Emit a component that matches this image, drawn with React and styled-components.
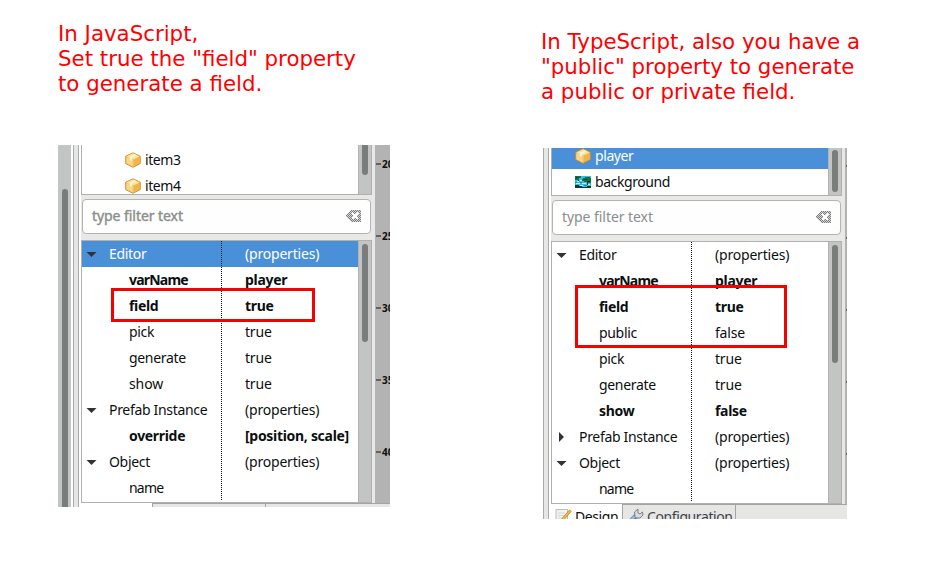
import React from "react";
import styled, { createGlobalStyle } from "styled-components";

const GlobalStyle = createGlobalStyle`
  * { box-sizing: border-box; }
  body {
    margin: 0;
    background: #fff;
    overflow: hidden;
  }
`;

const Page = styled.main`
  display: grid;
  grid-template-columns: 483px 1fr;
  width: 925px;
  height: 577px;
  overflow: hidden;
`;

const Column = styled.section`
  display: flex;
  flex-direction: column;
  align-items: flex-start;
  padding: ${(p) => p.$top}px 0 0 58px;
`;

const Caption = styled.h2`
  margin: 0;
  height: ${(p) => p.$height}px;
  font: 400 21.33px/25px "DejaVu Sans", sans-serif;
  letter-spacing: 0;
  color: #f00;
  white-space: pre;
`;

const Panel = styled.div`
  display: flex;
  flex: none;
  width: ${(p) => p.$width}px;
  height: ${(p) => p.$height}px;
  margin-left: ${(p) => p.$indent}px;
  overflow: hidden;
  background: #e8e8e7;
  color: #0c0f10;
  font: 14px/26px "Noto Sans", sans-serif;
`;

const Track = styled.div`
  flex: none;
  width: 13px;
  padding: ${(p) => p.$offset}px 0 0 ${(p) => (p.$edge ? 3 : 4)}px;
  background: #c3c5c4;
  border-left: ${(p) => (p.$edge ? 1 : 0)}px solid #b3b4b2;
`;

const Thumb = styled.div`
  width: 6px;
  height: ${(p) => p.$height}px;
  background: #797d7c;
  border-radius: ${(p) => (p.$cutTop ? "0 0 3px 3px" : "3px")};
`;

const Gap = styled.div`
  flex: none;
  width: 2px;
  background: #fff;
`;

const Sash = styled.div`
  flex: none;
  width: 6px;
  background: #e6e6e5;
  border: solid #a9abaa;
  border-width: 0 1px;
`;

const Views = styled.div`
  display: flex;
  flex-direction: column;
  flex: none;
  width: 291px;
`;

const Tree = styled.div`
  display: flex;
  flex: none;
  height: ${(p) => p.$height}px;
  border: solid #b0b1ae;
  border-width: 0 1px 1px;
  background: #fff;
`;

const TreeList = styled.ul`
  flex: 1;
  display: flex;
  flex-direction: column;
  justify-content: flex-end;
  margin: 0 0 ${(p) => p.$shift}px;
  padding: 0;
  list-style: none;
  overflow: hidden;
`;

const TreeItem = styled.li`
  display: flex;
  flex: none;
  align-items: center;
  gap: 4px;
  height: 26px;
  padding-left: ${(p) => p.$indent}px;
  background: ${(p) => (p.$selected ? "#4a90d9" : "transparent")};
  color: ${(p) => (p.$selected ? "#fff" : "inherit")};
  letter-spacing: -0.42px;
`;

const Filter = styled.div`
  display: flex;
  flex: none;
  align-items: center;
  justify-content: space-between;
  height: 35px;
  margin: 4px 1px 6px;
  padding: 0 9px 1px;
  border: 1px solid #b3b4b0;
  border-radius: 4px;
  background: #fefefe;
  color: #8b8e8b;
  letter-spacing: -0.06px;
  -webkit-text-stroke: ${(p) => (p.$heavy ? 0.4 : 0)}px #8b8e8b;
`;

const Properties = styled.div`
  position: relative;
  display: flex;
  flex: none;
  height: 263px;
  border: 1px solid #b0b1ae;
  background: #fff;
`;

const Rows = styled.div`
  flex: 1;
`;

const Row = styled.div`
  display: grid;
  grid-template-columns: 139px 1fr;
  height: 26px;
  background: ${(p) => (p.$selected ? "#4a90d9" : "transparent")};
  color: ${(p) => (p.$selected ? "#fff" : "inherit")};
  font-weight: ${(p) => (p.$bold ? 700 : 400)};
`;

const Name = styled.div`
  display: flex;
  align-items: center;
  padding-left: ${(p) => (p.$group ? 3 : 47)}px;
  gap: 11px;
  white-space: nowrap;
  letter-spacing: ${(p) => p.$tracking}px;
`;

const Value = styled.div`
  height: 26px;
  padding-left: 24px;
  white-space: nowrap;
  letter-spacing: ${(p) => (p.$bold ? -0.3 : -0.2)}px;
  background: repeating-linear-gradient(#111 0 1px, transparent 1px 2px) 0 0 / 1px 100% no-repeat;
`;

const Highlight = styled.div`
  position: absolute;
  left: ${(p) => p.$left}px;
  top: ${(p) => p.$top}px;
  width: ${(p) => p.$width}px;
  height: ${(p) => p.$height}px;
  border: 3px solid #f60000;
`;

const Tabs = styled.div`
  display: flex;
  flex: none;
  width: 316px;
  height: 26px;
  margin-left: -2px;
`;

const Tab = styled.div`
  display: flex;
  flex: none;
  gap: 3px;
  width: ${(p) => p.$width}px;
  padding-left: ${(p) => (p.$active ? 6 : 4)}px;
  border: solid #a3a5a2;
  border-width: ${(p) => (p.$active ? "0" : "1px 0 0 1px")};
  background: ${(p) => (p.$active ? "#fff" : "#e6e6e5")};
  color: ${(p) => (p.$active ? "#0c0f10" : "#3d4345")};
  line-height: ${(p) => (p.$active ? 25 : 24)}px;
  letter-spacing: -0.4px;
  white-space: nowrap;
`;

const TabIcon = styled.svg`
  flex: none;
  margin-top: ${(p) => p.$top}px;
`;

const Ruler = styled.div`
  flex: none;
  width: 20px;
  height: ${(p) => p.$height}px;
  margin-left: 3px;
  overflow: hidden;
  background: #b3b3b3;
`;

const MarkList = styled.div`
  margin-top: ${(p) => p.$shift}px;
`;

const Mark = styled.div`
  display: flex;
  align-items: center;
  height: 72px;
  padding-left: 1px;
  font: 700 10px/12px "Noto Sans", sans-serif;

  &::before {
    content: "";
    flex: none;
    width: 5px;
    height: 2px;
    margin-right: 1px;
    background: #626262;
  }
`;

const Edge = styled.div`
  flex: none;
  width: 2px;
  background: #fff;
`;

const BoxIcon = () => (
  <svg width="16" height="16" viewBox="0 0 16 16">
    <path d="M8 .8 15.300 4.200v7.400L8 15.300.700 11.600V4.200z" fill="#efb947" stroke="#c98b32" strokeWidth=".9" strokeLinejoin="round" />
    <path d="M8 1.300 14.600 4.400 8 7.700 1.400 4.400z" fill="#fde39a" />
    <path d="M1.400 5 7.700 8v6.500l-6.300-3.200z" fill="#fbd68a" />
    <path d="m8.300 8 6.300-3v6.300l-6.300 3.200z" fill="#edb54c" />
    <path d="m9.500 2.200 2.300 1.100-5 2.600v2.800l-2-1V4.800z" fill="#fff6d8" />
    <path d="M8 7.800v6.500" stroke="#f9dc98" strokeWidth=".6" />
  </svg>
);

const PictureIcon = () => (
  <svg width="16" height="12" viewBox="0 0 16 12" shapeRendering="crispEdges">
    <path fill="#31bdf0" d="M0 0h16v12H0z" />
    <path fill="#11733b" d="M0 0h6v2H4v2H0zM8 2h2V1h5v1h1v5h-3V6H9V5H7V3h1z" />
    <path fill="#093f29" d="M1 1h2v1H1zM9 3h3v1H9zM12 5h3v1h-3zM0 9h4v1h3v1h5v-1h4v2H0z" />
    <path fill="#b9f4ff" d="M5 4h2v1H5zM2 5h2v1H2zM1 7h4v1H1zM7 7h4v1H7zM12 8h3v1h-3zM5 9h3v1H5z" />
    <path fill="#188cc0" d="M0 6h2v1H0zM5 6h2v1H5zM9 9h3v1H9z" />
    <path fill="#4b3020" d="M12 6h1v3h-1zM3 4h1v1H3z" />
  </svg>
);

const ClearIcon = () => (
  <svg width="16" height="12" viewBox="0 0 16 12" shapeRendering="crispEdges">
    <defs>
      <pattern id="checker" width="2" height="2" patternUnits="userSpaceOnUse">
        <path fill="#d5d5d5" d="M0 0h2v2H0z" />
        <path fill="#7c7c7c" d="M0 0h1v1H0zM1 1h1v1H1z" />
      </pattern>
    </defs>
    <path fill="url(#checker)" d="M6 0h10v12H6L0 6z" />
    <path d="m7 3 6 6m0-6L7 9" stroke="#fff" strokeWidth="1.600" />
  </svg>
);

const Arrow = ({ open }) => (
  <svg width="13" height="12" viewBox="0 0 13 12">
    <path fill="#2e3436" d={open ? "M1.500 4h10l-5 5z" : "M4 1v10l5-5z"} />
  </svg>
);

const DesignIcon = () => (
  <TabIcon $top={4} width="17" height="17" viewBox="0 0 17 17">
    <path d="M1 1.5h11.5v15H1z" fill="#f1f3f1" stroke="#b9bdb9" />
    <path d="M3 5h7M3 7.500h6M3 10h5" stroke="#d3d7d4" />
    <path d="m14.500 2 1.700 1.400-8 9.200-3 1.400 1.200-2.800z" fill="#f4bc42" stroke="#b37e24" strokeWidth=".8" />
  </TabIcon>
);

const WrenchIcon = () => (
  <TabIcon $top={3} width="17" height="17" viewBox="0 0 17 17">
    <path d="m2 15 6-6" stroke="#5878ba" strokeWidth="5" strokeLinecap="round" />
    <path d="m2 14 5.500-5.500" stroke="#9bb6eb" strokeWidth="2.500" strokeLinecap="round" />
    <path d="M8 8.500 7.500 4 11 1v4l2 1 2.500-2 .5 3-3 3H9.500z" fill="#d9dcdc" stroke="#777e82" />
  </TabIcon>
);

const javascriptRows = [
  { name: "Editor", value: "(properties)", group: true, open: true, selected: true },
  { name: "varName", value: "player", bold: true, tracking: -0.8 },
  { name: "field", value: "true", bold: true },
  { name: "pick", value: "true" },
  { name: "generate", value: "true" },
  { name: "show", value: "true", tracking: -0.1 },
  { name: "Prefab Instance", value: "(properties)", group: true, open: true },
  { name: "override", value: "[position, scale]", bold: true },
  { name: "Object", value: "(properties)", group: true, open: true },
  { name: "name", value: "", tracking: -0.8 },
];

const typescriptRows = [
  { name: "Editor", value: "(properties)", group: true, open: true },
  { name: "varName", value: "player", bold: true, tracking: -0.8 },
  { name: "field", value: "true", bold: true },
  { name: "public", value: "false" },
  { name: "pick", value: "true" },
  { name: "generate", value: "true" },
  { name: "show", value: "false", bold: true },
  { name: "Prefab Instance", value: "(properties)", group: true, open: false },
  { name: "Object", value: "(properties)", group: true, open: true },
  { name: "name", value: "", tracking: -0.8 },
];

function FilterField({ heavy }) {
  return (
    <Filter $heavy={heavy}>
      <span>type filter text</span>
      <ClearIcon />
    </Filter>
  );
}

function PropertyTable({ rows, thumb, children }) {
  return (
    <Properties>
      <Rows>
        {rows.map((row) => (
          <Row key={row.name} $selected={row.selected} $bold={row.bold}>
            <Name $group={row.group} $tracking={row.tracking ?? -0.32}>
              {row.group && <Arrow open={row.open} />}
              {row.name}
            </Name>
            <Value $bold={row.bold}>{row.value}</Value>
          </Row>
        ))}
      </Rows>
      <Track $offset={3} $edge>
        <Thumb $height={thumb} />
      </Track>
      {children}
    </Properties>
  );
}

function Marks({ values, shift }) {
  return (
    <MarkList $shift={shift}>
      {values.map((value) => (
        <Mark key={value}>{value}</Mark>
      ))}
    </MarkList>
  );
}

export default function App() {
  return (
    <>
      <GlobalStyle />
      <Page>
        <Column $top={21}>
          <Caption $height={124}>{'In JavaScript,\nSet true the "field" property\nto generate a field.'}</Caption>
          <Panel $width={332} $height={362} $indent={0}>
            <Track $offset={44}>
              <Thumb $height={340} />
            </Track>
            <Gap />
            <Sash />
            <Edge />
            <Views>
              <Tree $height={50}>
                <TreeList $shift={-5}>
                  <TreeItem $indent={43}>
                    <BoxIcon />
                    item3
                  </TreeItem>
                  <TreeItem $indent={43}>
                    <BoxIcon />
                    item4
                  </TreeItem>
                </TreeList>
                <Track $offset={0} $edge>
                  <Thumb $height={30} $cutTop />
                </Track>
              </Tree>
              <FilterField heavy />
              <PropertyTable rows={javascriptRows} thumb={98}>
                <Highlight $left={29} $top={47} $width={204} $height={34} />
              </PropertyTable>
              <Tabs>
                <Tab $active $width={73} />
                <Tab $width={113} />
                <Tab $width={130} />
              </Tabs>
            </Views>
            <Ruler $height={358}>
              <Marks values={[20, 25, 30, 35, 40]} shift={-17} />
            </Ruler>
          </Panel>
        </Column>
        <Column $top={29}>
          <Caption $height={119}>{'In TypeScript, also you have a\n"public" property to generate\na public or private field.'}</Caption>
          <Panel $width={304} $height={371} $indent={2}>
            <Sash />
            <Edge />
            <Views>
              <Tree $height={48}>
                <TreeList $shift={0}>
                  <TreeItem $indent={23} $selected>
                    <BoxIcon />
                    player
                  </TreeItem>
                  <TreeItem $indent={23}>
                    <PictureIcon />
                    background
                  </TreeItem>
                </TreeList>
                <Track $offset={2} $edge>
                  <Thumb $height={42} />
                </Track>
              </Tree>
              <FilterField />
              <PropertyTable rows={typescriptRows} thumb={118}>
                <Highlight $left={23} $top={43} $width={212} $height={63} />
              </PropertyTable>
              <Tabs>
                <Tab $active $width={73}>
                  <DesignIcon />
                  Design
                </Tab>
                <Tab $width={113}>
                  <WrenchIcon />
                  Configuration
                </Tab>
                <Tab $width={130} />
              </Tabs>
            </Views>
            <Ruler $height={356}>
              <Marks values={[20, 25, 30, 35, 40]} shift={-18} />
            </Ruler>
          </Panel>
        </Column>
      </Page>
    </>
  );
}
